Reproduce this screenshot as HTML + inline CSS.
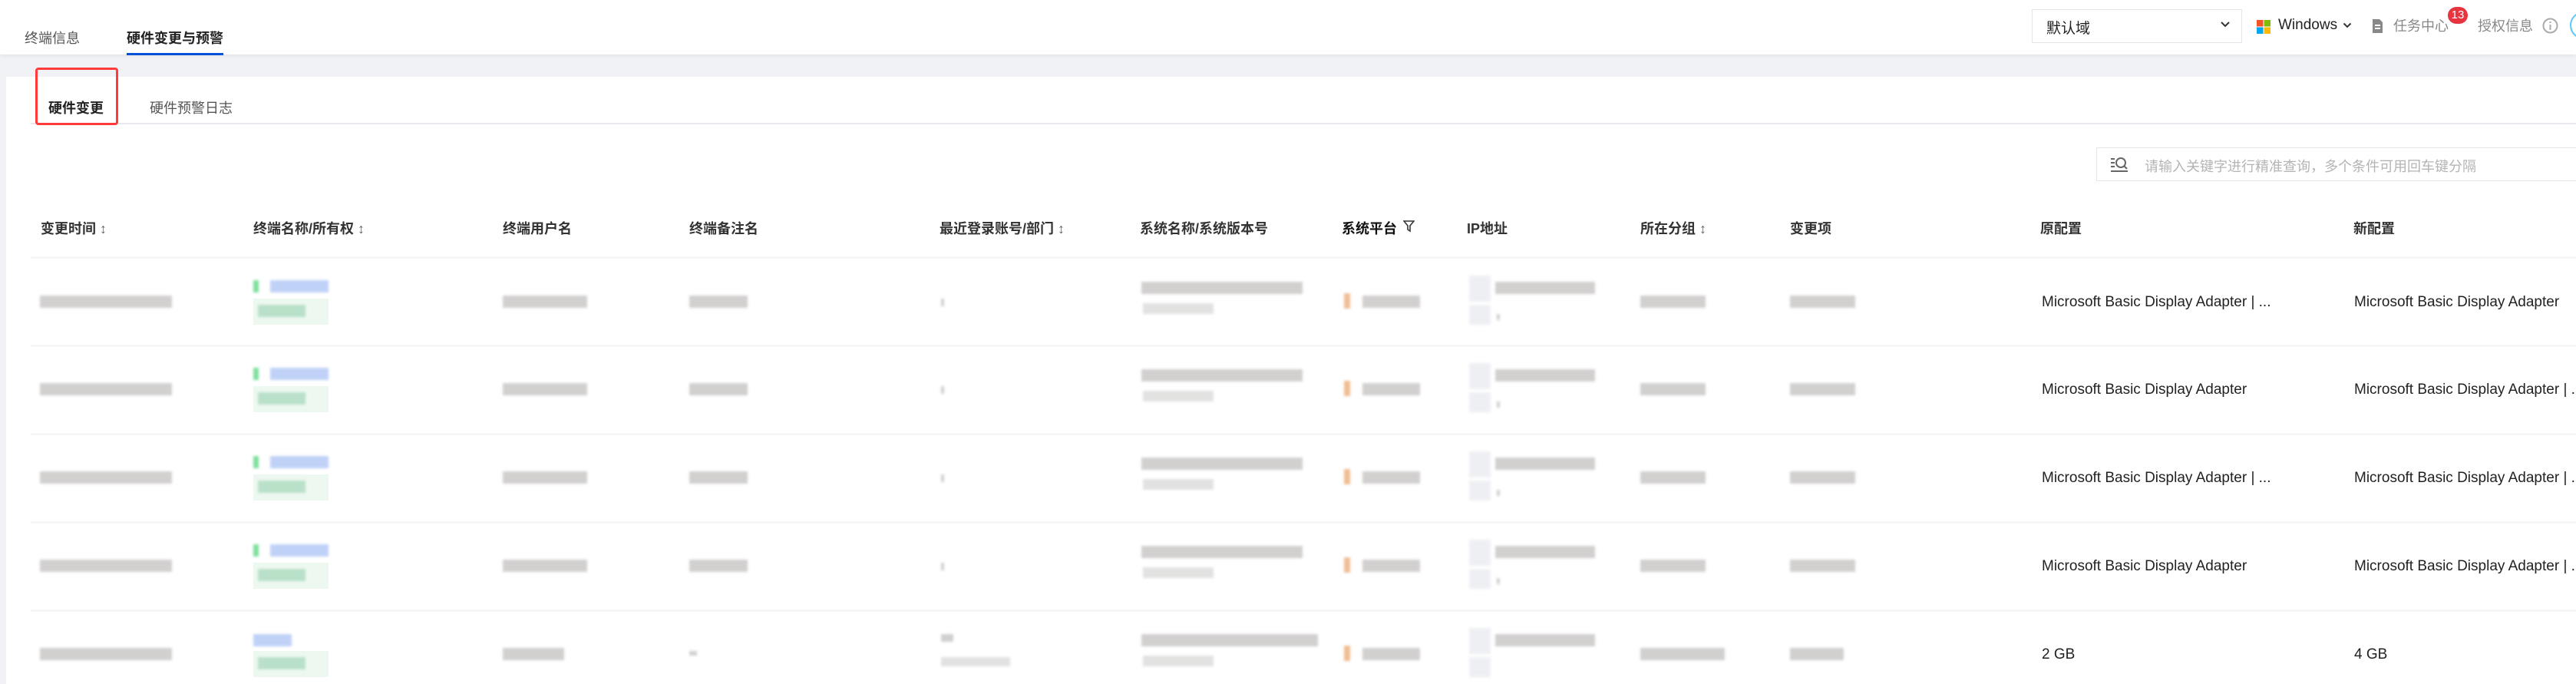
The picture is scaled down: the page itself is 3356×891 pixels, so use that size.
<!DOCTYPE html>
<html><head><meta charset="utf-8"><style>
*{margin:0;padding:0;box-sizing:border-box}
html,body{width:3356px;height:891px;overflow:hidden}
body{background:#f0f2f5;font-family:"Liberation Sans","Noto Sans CJK SC",sans-serif;color:#333}
#w{position:relative;width:3356px;height:891px;overflow:hidden}
.a{position:absolute;white-space:nowrap}
.top{position:absolute;left:0;top:0;width:3356px;height:71px;background:#fff;box-shadow:0 2px 4px rgba(0,0,0,.06)}
.panel{position:absolute;left:8px;top:100px;width:3348px;height:791px;background:#fff}
.th{position:absolute;top:284px;font-size:18px;font-weight:bold;color:#333;white-space:nowrap}
.row{position:absolute;left:0;width:3356px;height:115px}
.sep{position:absolute;left:40px;right:0;height:3px;background:#f6f6f7}
.b{position:absolute;background:#b9b7b6;filter:blur(1.6px);height:16px;opacity:.65}
.l{position:absolute;font-size:19px;color:#222;top:46px;white-space:nowrap}
</style></head><body><div id="w">
<div class="top"></div>
<div class="a" style="left:32px;top:36px;font-size:18px;color:#555">终端信息</div>
<div class="a" style="left:165px;top:36px;font-size:18px;font-weight:bold;color:#222">硬件变更与预警</div>
<div class="a" style="left:165px;top:69px;width:126px;height:3px;background:#0052d9"></div>

<div class="a" style="left:2647px;top:12px;width:274px;height:44px;border:1px solid #e3e5ea;background:#fff"></div>
<div class="a" style="left:2666px;top:22px;font-size:19px;color:#222">默认域</div>
<svg class="a" style="left:2892px;top:27px" width="14" height="10" viewBox="0 0 14 10"><path d="M2 2l5 5 5-5" stroke="#333" stroke-width="2" fill="none"/></svg>
<svg class="a" style="left:2940px;top:26px" width="18" height="18"><rect x="0" y="0" width="8.5" height="8.5" fill="#f35325"/><rect x="9.5" y="0" width="8.5" height="8.5" fill="#81bc06"/><rect x="0" y="9.5" width="8.5" height="8.5" fill="#05a6f0"/><rect x="9.5" y="9.5" width="8.5" height="8.5" fill="#ffba08"/></svg>
<div class="a" style="left:2968px;top:22px;font-size:19px;color:#222">Windows</div>
<svg class="a" style="left:3052px;top:29px" width="12" height="9"><path d="M1.5 1.5l4.5 4.5 4.5-4.5" stroke="#333" stroke-width="2" fill="none"/></svg>
<svg class="a" style="left:3090px;top:24px" width="15" height="20"><path d="M1 1h9l4 4v14H1z" fill="#888"/><rect x="4" y="8" width="7" height="2" fill="#fff"/><rect x="4" y="12" width="7" height="2" fill="#fff"/></svg>
<div class="a" style="left:3118px;top:20px;font-size:18px;color:#888">任务中心</div>
<div class="a" style="left:3189px;top:9px;width:26px;height:22px;border-radius:11px;background:#e8343f;color:#fff;font-size:15px;text-align:center;line-height:22px">13</div>
<div class="a" style="left:3228px;top:20px;font-size:18px;color:#888">授权信息</div>
<svg class="a" style="left:3312px;top:23px" width="21" height="21"><circle cx="10.5" cy="10.5" r="9" stroke="#aaa" stroke-width="2" fill="none"/><rect x="9.5" y="9" width="2" height="7" fill="#aaa"/><rect x="9.5" y="5" width="2" height="2" fill="#aaa"/></svg>
<div class="a" style="left:3348px;top:15px;width:36px;height:36px;border:2px solid #5ac8fa;border-radius:50%"></div>

<div class="panel"></div>
<div class="a" style="left:40px;top:160px;width:3316px;height:2px;background:#e7e9ef"></div>
<div class="a" style="left:46px;top:88px;width:108px;height:75px;border:3px solid #ff3b3b;border-radius:4px"></div>
<div class="a" style="left:63px;top:127px;font-size:18px;font-weight:bold;color:#222">硬件变更</div>
<div class="a" style="left:195px;top:127px;font-size:18px;color:#555">硬件预警日志</div>

<div class="a" style="left:2731px;top:192px;width:640px;height:44px;border:1px solid #e3e5ea"></div>
<svg class="a" style="left:2749px;top:203px" width="24" height="22"><path d="M1 4h5M1 9h5M1 14h5M1 20h22" stroke="#666" stroke-width="2"/><circle cx="14" cy="9" r="6" stroke="#666" stroke-width="2" fill="none"/><path d="M18 13l4 4" stroke="#666" stroke-width="2"/></svg>
<div class="a" style="left:2794px;top:203px;font-size:18px;color:#b4b4b4">请输入关键字进行精准查询，多个条件可用回车键分隔</div>

<div class="th" style="left:53px">变更时间 <span style="font-weight:normal;color:#666">↕</span></div>
<div class="th" style="left:330px">终端名称/所有权 <span style="font-weight:normal;color:#666">↕</span></div>
<div class="th" style="left:655px">终端用户名</div>
<div class="th" style="left:898px">终端备注名</div>
<div class="th" style="left:1224px">最近登录账号/部门 <span style="font-weight:normal;color:#666">↕</span></div>
<div class="th" style="left:1485px">系统名称/系统版本号</div>
<div class="th" style="left:1748px;color:#111">系统平台</div>
<svg class="a" style="left:1828px;top:287px" width="15" height="16"><path d="M1 1h13l-5 6v7l-3-2V7z" stroke="#333" stroke-width="1.6" fill="none"/></svg>
<div class="th" style="left:1911px">IP地址</div>
<div class="th" style="left:2137px">所在分组 <span style="font-weight:normal;color:#666">↕</span></div>
<div class="th" style="left:2332px">变更项</div>
<div class="th" style="left:2658px">原配置</div>
<div class="th" style="left:3066px">新配置</div>
<div class="sep" style="top:334px"></div>

<div class="row" style="top:337px">
<div class="b" style="left:52px;top:48px;width:172px"></div>
<div class="b" style="left:330px;top:28px;width:7px;background:#3ccf6a"></div><div class="b" style="left:352px;top:28px;width:76px;background:#9dbaf3"></div>
<div class="b" style="left:330px;top:52px;width:98px;height:34px;background:#e3f5ea;filter:none"></div><div class="b" style="left:336px;top:60px;width:62px;height:16px;background:#9ed4b3"></div>
<div class="b" style="left:655px;top:48px;width:110px"></div><div class="b" style="left:898px;top:48px;width:76px"></div><div class="b" style="left:1226px;top:52px;width:4px;height:10px"></div>
<div class="b" style="left:1487px;top:30px;width:210px"></div><div class="b" style="left:1489px;top:58px;width:92px;height:14px;opacity:.4"></div>
<div class="b" style="left:1751px;top:45px;width:8px;height:20px;background:#e99a5a"></div><div class="b" style="left:1775px;top:48px;width:75px"></div>
<div class="b" style="left:1914px;top:22px;width:28px;height:34px;background:#e6e8ee"></div><div class="b" style="left:1948px;top:30px;width:130px"></div><div class="b" style="left:1914px;top:60px;width:28px;height:26px;background:#e6e8ee"></div><div class="b" style="left:1950px;top:72px;width:4px;height:8px"></div>
<div class="b" style="left:2137px;top:48px;width:85px"></div><div class="b" style="left:2332px;top:48px;width:85px"></div>
<div class="l" style="left:2660px">Microsoft Basic Display Adapter | ...</div><div class="l" style="left:3067px">Microsoft Basic Display Adapter</div>
</div>
<div class="sep" style="top:449px"></div>

<div class="row" style="top:451px">
<div class="b" style="left:52px;top:48px;width:172px"></div>
<div class="b" style="left:330px;top:28px;width:7px;background:#3ccf6a"></div><div class="b" style="left:352px;top:28px;width:76px;background:#9dbaf3"></div>
<div class="b" style="left:330px;top:52px;width:98px;height:34px;background:#e3f5ea;filter:none"></div><div class="b" style="left:336px;top:60px;width:62px;height:16px;background:#9ed4b3"></div>
<div class="b" style="left:655px;top:48px;width:110px"></div><div class="b" style="left:898px;top:48px;width:76px"></div><div class="b" style="left:1226px;top:52px;width:4px;height:10px"></div>
<div class="b" style="left:1487px;top:30px;width:210px"></div><div class="b" style="left:1489px;top:58px;width:92px;height:14px;opacity:.4"></div>
<div class="b" style="left:1751px;top:45px;width:8px;height:20px;background:#e99a5a"></div><div class="b" style="left:1775px;top:48px;width:75px"></div>
<div class="b" style="left:1914px;top:22px;width:28px;height:34px;background:#e6e8ee"></div><div class="b" style="left:1948px;top:30px;width:130px"></div><div class="b" style="left:1914px;top:60px;width:28px;height:26px;background:#e6e8ee"></div><div class="b" style="left:1950px;top:72px;width:4px;height:8px"></div>
<div class="b" style="left:2137px;top:48px;width:85px"></div><div class="b" style="left:2332px;top:48px;width:85px"></div>
<div class="l" style="left:2660px">Microsoft Basic Display Adapter</div><div class="l" style="left:3067px">Microsoft Basic Display Adapter | ...</div>
</div>
<div class="sep" style="top:564px"></div>

<div class="row" style="top:566px">
<div class="b" style="left:52px;top:48px;width:172px"></div>
<div class="b" style="left:330px;top:28px;width:7px;background:#3ccf6a"></div><div class="b" style="left:352px;top:28px;width:76px;background:#9dbaf3"></div>
<div class="b" style="left:330px;top:52px;width:98px;height:34px;background:#e3f5ea;filter:none"></div><div class="b" style="left:336px;top:60px;width:62px;height:16px;background:#9ed4b3"></div>
<div class="b" style="left:655px;top:48px;width:110px"></div><div class="b" style="left:898px;top:48px;width:76px"></div><div class="b" style="left:1226px;top:52px;width:4px;height:10px"></div>
<div class="b" style="left:1487px;top:30px;width:210px"></div><div class="b" style="left:1489px;top:58px;width:92px;height:14px;opacity:.4"></div>
<div class="b" style="left:1751px;top:45px;width:8px;height:20px;background:#e99a5a"></div><div class="b" style="left:1775px;top:48px;width:75px"></div>
<div class="b" style="left:1914px;top:22px;width:28px;height:34px;background:#e6e8ee"></div><div class="b" style="left:1948px;top:30px;width:130px"></div><div class="b" style="left:1914px;top:60px;width:28px;height:26px;background:#e6e8ee"></div><div class="b" style="left:1950px;top:72px;width:4px;height:8px"></div>
<div class="b" style="left:2137px;top:48px;width:85px"></div><div class="b" style="left:2332px;top:48px;width:85px"></div>
<div class="l" style="left:2660px">Microsoft Basic Display Adapter | ...</div><div class="l" style="left:3067px">Microsoft Basic Display Adapter | ...</div>
</div>
<div class="sep" style="top:679px"></div>

<div class="row" style="top:681px">
<div class="b" style="left:52px;top:48px;width:172px"></div>
<div class="b" style="left:330px;top:28px;width:7px;background:#3ccf6a"></div><div class="b" style="left:352px;top:28px;width:76px;background:#9dbaf3"></div>
<div class="b" style="left:330px;top:52px;width:98px;height:34px;background:#e3f5ea;filter:none"></div><div class="b" style="left:336px;top:60px;width:62px;height:16px;background:#9ed4b3"></div>
<div class="b" style="left:655px;top:48px;width:110px"></div><div class="b" style="left:898px;top:48px;width:76px"></div><div class="b" style="left:1226px;top:52px;width:4px;height:10px"></div>
<div class="b" style="left:1487px;top:30px;width:210px"></div><div class="b" style="left:1489px;top:58px;width:92px;height:14px;opacity:.4"></div>
<div class="b" style="left:1751px;top:45px;width:8px;height:20px;background:#e99a5a"></div><div class="b" style="left:1775px;top:48px;width:75px"></div>
<div class="b" style="left:1914px;top:22px;width:28px;height:34px;background:#e6e8ee"></div><div class="b" style="left:1948px;top:30px;width:130px"></div><div class="b" style="left:1914px;top:60px;width:28px;height:26px;background:#e6e8ee"></div><div class="b" style="left:1950px;top:72px;width:4px;height:8px"></div>
<div class="b" style="left:2137px;top:48px;width:85px"></div><div class="b" style="left:2332px;top:48px;width:85px"></div>
<div class="l" style="left:2660px">Microsoft Basic Display Adapter</div><div class="l" style="left:3067px">Microsoft Basic Display Adapter | ...</div>
</div>
<div class="sep" style="top:794px"></div>

<div class="row" style="top:796px">
<div class="b" style="left:52px;top:48px;width:172px"></div>
<div class="b" style="left:330px;top:30px;width:50px;background:#9dbaf3"></div>
<div class="b" style="left:330px;top:52px;width:98px;height:34px;background:#e3f5ea;filter:none"></div><div class="b" style="left:336px;top:60px;width:62px;height:16px;background:#9ed4b3"></div>
<div class="b" style="left:655px;top:48px;width:80px"></div><div class="b" style="left:898px;top:52px;width:10px;height:6px"></div>
<div class="b" style="left:1226px;top:30px;width:16px;height:10px"></div><div class="b" style="left:1226px;top:60px;width:90px;height:12px;opacity:.4"></div>
<div class="b" style="left:1487px;top:30px;width:230px"></div><div class="b" style="left:1489px;top:58px;width:92px;height:14px;opacity:.4"></div>
<div class="b" style="left:1751px;top:45px;width:8px;height:20px;background:#e99a5a"></div><div class="b" style="left:1775px;top:48px;width:75px"></div>
<div class="b" style="left:1914px;top:22px;width:28px;height:34px;background:#e6e8ee"></div><div class="b" style="left:1948px;top:30px;width:130px"></div><div class="b" style="left:1914px;top:60px;width:28px;height:26px;background:#e6e8ee"></div>
<div class="b" style="left:2137px;top:48px;width:110px"></div><div class="b" style="left:2332px;top:48px;width:70px"></div>
<div class="l" style="left:2660px">2 GB</div><div class="l" style="left:3067px">4 GB</div>
</div>
</div></body></html>
